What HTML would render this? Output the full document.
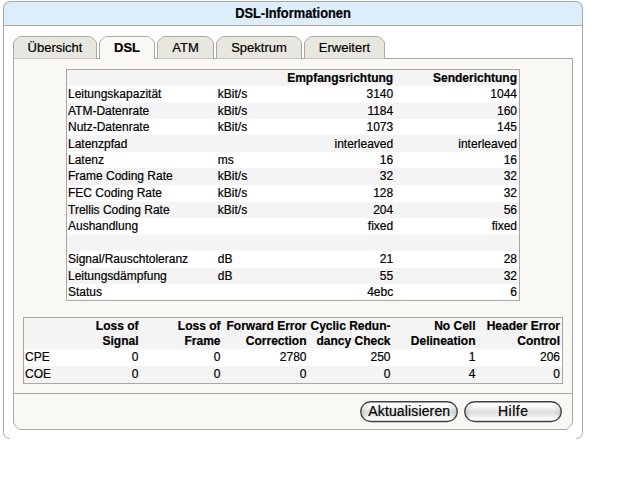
<!DOCTYPE html>
<html><head><meta charset="utf-8">
<style>
html,body{margin:0;padding:0;background:#fff;width:640px;height:480px;overflow:hidden;position:relative;font-family:"Liberation Sans",sans-serif;color:#000;-webkit-text-stroke:0.2px #000}
.abs{position:absolute}
#title{left:3px;top:1px;width:580px;height:24px;background:#dcedfc;border-radius:6px 6px 0 0;border-bottom:1px solid #aaa79e}
#title span{position:absolute;left:0;right:0;top:4px;text-align:center;font-weight:bold;font-size:14px;line-height:16px;transform:scaleX(0.918)}
.tab{position:absolute;top:37px;height:22px;font-size:13px;text-align:center;line-height:22px;box-sizing:border-box}
.tab.on{font-weight:bold}
#sep{left:14px;top:393px;width:558px;height:1px;background:#aaa79e}
table{border-collapse:collapse;position:absolute;font-size:12px}
td{padding:0 2px 0 1px;line-height:16px;height:16px;white-space:nowrap;vertical-align:top}
#t1 tr.x td{padding-bottom:1px}
#t1 tr.d td{padding-top:1px;padding-bottom:0}
tr.g td{background:#f4f4f4}
tr.w td{background:#fff}
#t1{left:66px;top:69px;width:454px;border:1px solid #aaa79e}
#t2{left:23px;top:317px;width:540px;border:1px solid #aaa79e}
#t2 td{line-height:15px;height:15px;padding-top:1px;padding-bottom:1px}
#t2 tr.h td{padding-top:0.5px;padding-bottom:0.5px;height:30px}
.r{text-align:right}
.b{font-weight:bold}
.btn{position:absolute;top:401px;height:21px;width:98px;font-size:14px;text-align:center;line-height:21px;letter-spacing:0.12px}
.btn svg{position:absolute;left:0;top:0}
.btn span{position:relative}
</style></head><body>
<div id="title" class="abs"><span>DSL-Informationen</span></div>
<svg class="abs" style="left:0;top:0" width="640" height="480"><path d="M3.5,432.5 L3.5,8.5 A7,7 0 0 1 10.5,1.5 L575.5,1.5 A7,7 0 0 1 582.5,8.5 L582.5,432.5 A6,6 0 0 1 576.5,438.5 M3.5,432.5 A6,6 0 0 0 9.5,438.5" fill="none" stroke="#aaa79e" stroke-width="1"/></svg>
<svg class="abs" style="left:0;top:0" width="640" height="480">
<path d="M13.5,58.5 L572.5,58.5 L572.5,422 C572.5,424 568,429.5 566,429.5 L20,429.5 C18,429.5 13.5,424 13.5,422 Z" fill="#f9f8f4" stroke="#aaa79e"/>
<path d="M13.5,58.5 L13.5,43 C13.5,41 18.5,36.5 20.5,36.5 L89.5,36.5 C91.5,36.5 96.5,41 96.5,43 L96.5,58.5 Z" fill="#e7e6df" stroke="none"/><path d="M13.5,58.5 L13.5,43 C13.5,41 18.5,36.5 20.5,36.5 L89.5,36.5 C91.5,36.5 96.5,41 96.5,43 L96.5,58.5" fill="none" stroke="#aaa79e"/>
<path d="M157.5,58.5 L157.5,43 C157.5,41 162.5,36.5 164.5,36.5 L206.5,36.5 C208.5,36.5 213.5,41 213.5,43 L213.5,58.5 Z" fill="#e7e6df" stroke="none"/><path d="M157.5,58.5 L157.5,43 C157.5,41 162.5,36.5 164.5,36.5 L206.5,36.5 C208.5,36.5 213.5,41 213.5,43 L213.5,58.5" fill="none" stroke="#aaa79e"/>
<path d="M216.5,58.5 L216.5,43 C216.5,41 221.5,36.5 223.5,36.5 L294.5,36.5 C296.5,36.5 301.5,41 301.5,43 L301.5,58.5 Z" fill="#e7e6df" stroke="none"/><path d="M216.5,58.5 L216.5,43 C216.5,41 221.5,36.5 223.5,36.5 L294.5,36.5 C296.5,36.5 301.5,41 301.5,43 L301.5,58.5" fill="none" stroke="#aaa79e"/>
<path d="M304.5,58.5 L304.5,43 C304.5,41 309.5,36.5 311.5,36.5 L377.5,36.5 C379.5,36.5 384.5,41 384.5,43 L384.5,58.5 Z" fill="#e7e6df" stroke="none"/><path d="M304.5,58.5 L304.5,43 C304.5,41 309.5,36.5 311.5,36.5 L377.5,36.5 C379.5,36.5 384.5,41 384.5,43 L384.5,58.5" fill="none" stroke="#aaa79e"/>
<path d="M99.5,59 L99.5,43 C99.5,41 104.5,36.5 106.5,36.5 L147.5,36.5 C149.5,36.5 154.5,41 154.5,43 L154.5,59 Z" fill="#f9f8f4" stroke="none"/><path d="M99.5,59 L99.5,43 C99.5,41 104.5,36.5 106.5,36.5 L147.5,36.5 C149.5,36.5 154.5,41 154.5,43 L154.5,59" fill="none" stroke="#aaa79e"/>
</svg>
<div class="tab" style="left:13px;width:84px">Übersicht</div><div class="tab on" style="left:99px;width:56px">DSL</div><div class="tab" style="left:157px;width:57px">ATM</div><div class="tab" style="left:216px;width:86px">Spektrum</div><div class="tab" style="left:304px;width:81px">Erweitert</div>
<div id="sep" class="abs"></div>

<table id="t1">
<colgroup><col style="width:150px"><col style="width:63px"><col style="width:115px"><col style="width:124px"></colgroup>
<tr class="g b"><td></td><td></td><td class="r b">Empfangsrichtung</td><td class="r b">Senderichtung</td></tr>
<tr class="w x"><td>Leitungskapazität</td><td>kBit/s</td><td class="r">3140</td><td class="r">1044</td></tr>
<tr class="g"><td>ATM-Datenrate</td><td>kBit/s</td><td class="r">1184</td><td class="r">160</td></tr>
<tr class="w"><td>Nutz-Datenrate</td><td>kBit/s</td><td class="r">1073</td><td class="r">145</td></tr>
<tr class="g x d"><td>Latenzpfad</td><td></td><td class="r">interleaved</td><td class="r">interleaved</td></tr>
<tr class="w"><td>Latenz</td><td>ms</td><td class="r">16</td><td class="r">16</td></tr>
<tr class="g x"><td>Frame Coding Rate</td><td>kBit/s</td><td class="r">32</td><td class="r">32</td></tr>
<tr class="w x"><td>FEC Coding Rate</td><td>kBit/s</td><td class="r">128</td><td class="r">32</td></tr>
<tr class="g"><td>Trellis Coding Rate</td><td>kBit/s</td><td class="r">204</td><td class="r">56</td></tr>
<tr class="w x"><td>Aushandlung</td><td></td><td class="r">fixed</td><td class="r">fixed</td></tr>
<tr class="g"><td></td><td></td><td></td><td></td></tr>
<tr class="w x"><td>Signal/Rauschtoleranz</td><td>dB</td><td class="r">21</td><td class="r">28</td></tr>
<tr class="g"><td>Leitungsdämpfung</td><td>dB</td><td class="r">55</td><td class="r">32</td></tr>
<tr class="w"><td>Status</td><td></td><td class="r">4ebc</td><td class="r">6</td></tr>
</table>

<table id="t2">
<colgroup><col style="width:70px"><col style="width:47px"><col style="width:82px"><col style="width:86px"><col style="width:84px"><col style="width:85px"><col style="width:85px"></colgroup>
<tr class="g b h"><td></td><td class="r">Loss of<br>Signal</td><td class="r">Loss of<br>Frame</td><td class="r">Forward Error<br>Correction</td><td class="r">Cyclic Redun-<br>dancy Check</td><td class="r">No Cell<br>Delineation</td><td class="r">Header Error<br>Control</td></tr>
<tr class="w"><td>CPE</td><td class="r">0</td><td class="r">0</td><td class="r">2780</td><td class="r">250</td><td class="r">1</td><td class="r">206</td></tr>
<tr class="g"><td>COE</td><td class="r">0</td><td class="r">0</td><td class="r">0</td><td class="r">0</td><td class="r">4</td><td class="r">0</td></tr>
</table>

<div class="btn" style="left:360px"><svg width="98" height="22"><defs><linearGradient id="bg" x1="0" y1="0" x2="0" y2="1"><stop offset="0" stop-color="#fff"/><stop offset="0.22" stop-color="#fbfbfb"/><stop offset="0.45" stop-color="#e6e6e6"/><stop offset="0.55" stop-color="#dfdfdf"/><stop offset="0.72" stop-color="#ececec"/><stop offset="0.9" stop-color="#fdfdfd"/><stop offset="1" stop-color="#fff"/></linearGradient>
<linearGradient id="sh" x1="0" y1="0" x2="1" y2="0"><stop offset="0" stop-color="#000" stop-opacity="0.12"/><stop offset="0.07" stop-color="#000" stop-opacity="0"/><stop offset="0.93" stop-color="#000" stop-opacity="0"/><stop offset="1" stop-color="#000" stop-opacity="0.12"/></linearGradient></defs>
<rect x="0.75" y="1.25" width="96.5" height="20" rx="10" fill="#000" fill-opacity="0.12"/>
<rect x="0.75" y="0.75" width="96.5" height="19.75" rx="9.9" fill="url(#bg)"/>
<rect x="0.75" y="0.75" width="96.5" height="19.75" rx="9.9" fill="url(#sh)" stroke="#404040" stroke-width="1.35"/></svg><span style="letter-spacing:0.14px;padding-left:0.6px">Aktualisieren</span></div>
<div class="btn" style="left:464px"><svg width="98" height="22"><defs><linearGradient id="bg2" x1="0" y1="0" x2="0" y2="1"><stop offset="0" stop-color="#fff"/><stop offset="0.22" stop-color="#fbfbfb"/><stop offset="0.45" stop-color="#e6e6e6"/><stop offset="0.55" stop-color="#dfdfdf"/><stop offset="0.72" stop-color="#ececec"/><stop offset="0.9" stop-color="#fdfdfd"/><stop offset="1" stop-color="#fff"/></linearGradient>
<linearGradient id="sh2" x1="0" y1="0" x2="1" y2="0"><stop offset="0" stop-color="#000" stop-opacity="0.12"/><stop offset="0.07" stop-color="#000" stop-opacity="0"/><stop offset="0.93" stop-color="#000" stop-opacity="0"/><stop offset="1" stop-color="#000" stop-opacity="0.12"/></linearGradient></defs>
<rect x="0.75" y="1.25" width="96.5" height="20" rx="10" fill="#000" fill-opacity="0.12"/>
<rect x="0.75" y="0.75" width="96.5" height="19.75" rx="9.9" fill="url(#bg2)"/>
<rect x="0.75" y="0.75" width="96.5" height="19.75" rx="9.9" fill="url(#sh2)" stroke="#404040" stroke-width="1.35"/></svg><span style="letter-spacing:0.5px;padding-left:0.5px">Hilfe</span></div>
</body></html>
